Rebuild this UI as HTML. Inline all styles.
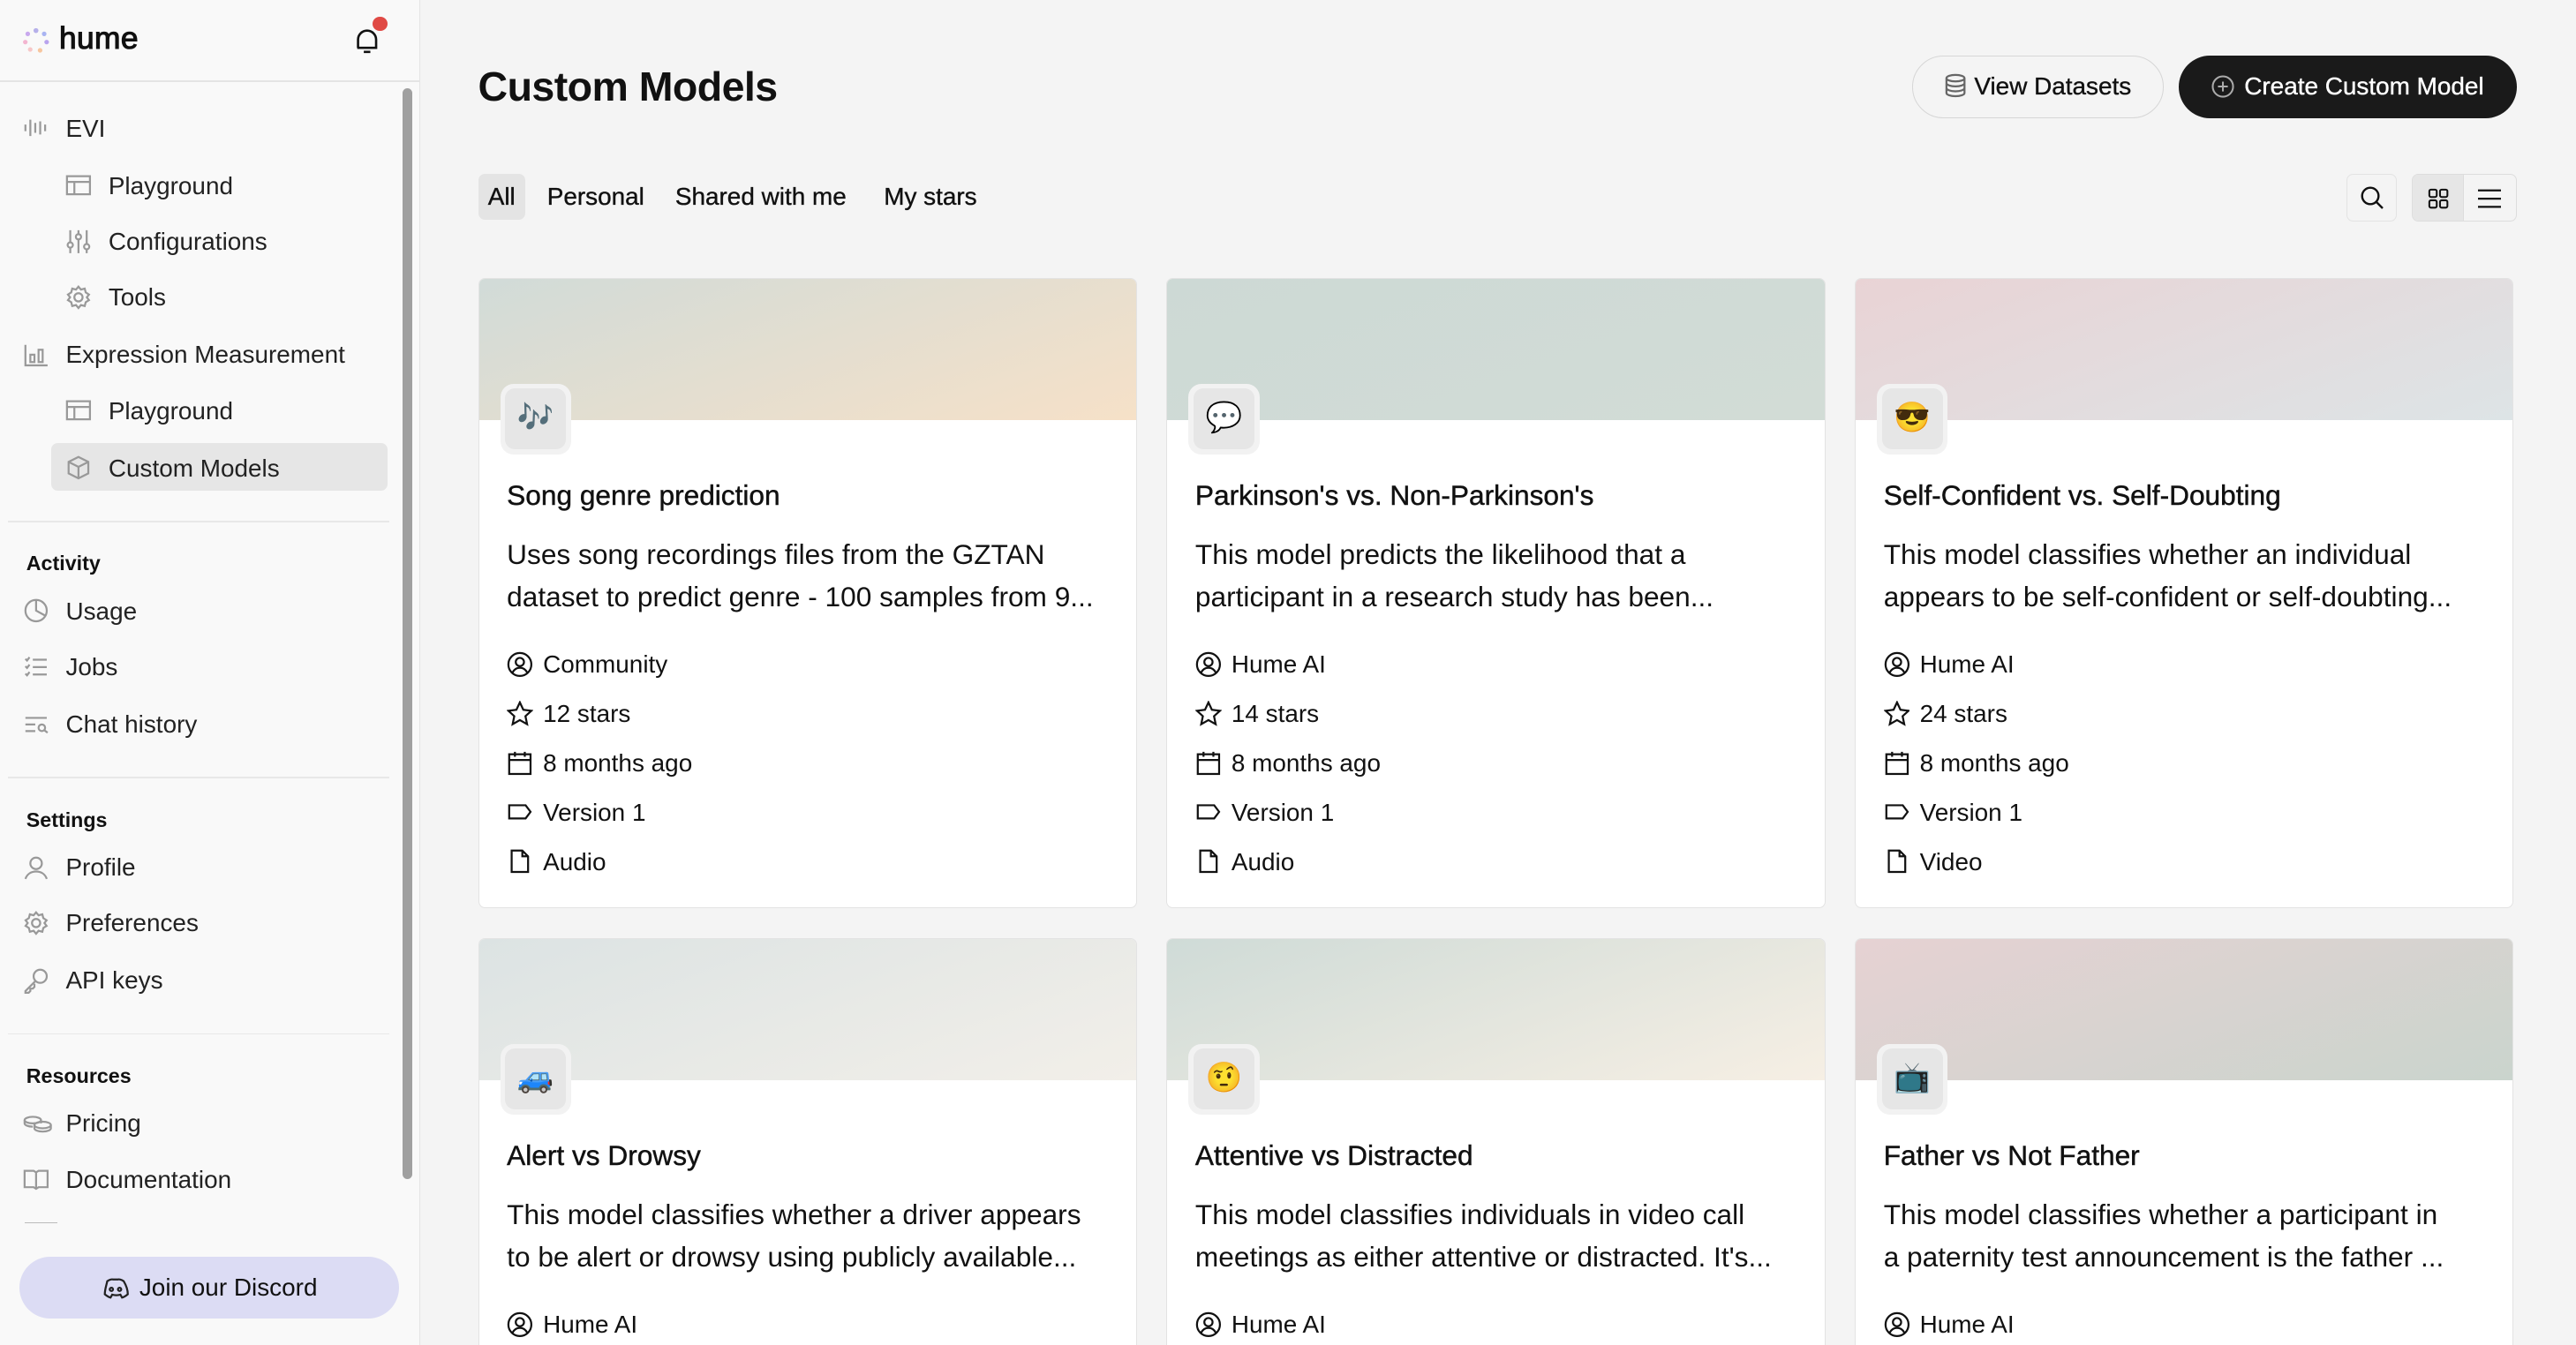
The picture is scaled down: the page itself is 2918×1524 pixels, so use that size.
<!DOCTYPE html>
<html><head><meta charset="utf-8"><style>
*{box-sizing:border-box;margin:0;padding:0}
html,body{width:2918px;height:1524px;overflow:hidden;background:#f4f4f4}
#w{zoom:1.861;width:1568px;height:819px;position:relative;font-family:"Liberation Sans","Noto Sans CJK JP",sans-serif;color:#111;overflow:hidden}
.a{position:absolute}
#sb{left:0;top:0;width:256px;height:819px;background:#f9f9f9;border-right:1px solid #e4e4e4}
.ni{position:absolute;font-size:15px;color:#222;white-space:nowrap;line-height:20px}
.ni svg{position:absolute;left:-26px;top:2px}
.sec{position:absolute;left:16px;font-size:12.5px;font-weight:bold;color:#111}
.hr{position:absolute;left:5px;width:232px;height:1px;background:#e8e8e8}
.card{position:absolute;width:401px;height:384px;background:#fff;border:1px solid #e3e3e3;border-radius:4px;overflow:hidden}
.ban{height:86px}
.ib{position:absolute;left:13px;top:64px;width:43px;height:43px;background:#f2f2f2;border-radius:8px;padding:3px}
.ib div{width:37px;height:37px;background:#e6e6e6;border-radius:6px;text-align:center;line-height:37px;font-size:18px}
.t{position:absolute;left:17px;top:122px;font-size:17px;font-weight:500;white-space:nowrap;-webkit-text-stroke:0.25px #111}
.d{position:absolute;left:17px;top:155px;width:360px;font-size:17px;line-height:26px;color:#111}
.m{position:absolute;left:17px;font-size:15px;white-space:nowrap;line-height:20px;padding-left:22px}
.m svg{position:absolute;left:0;top:2px}
.tab{position:absolute;top:106px;height:28px;line-height:28px;font-size:15px;padding:0 6px;border-radius:4px;-webkit-text-stroke:0.2px #111}
</style></head><body><div id="w">
<div id="sb" class="a">
 <svg class="a" style="left:13px;top:16px" width="18" height="18" viewBox="0 0 18 18"><circle cx="9" cy="2.5" r="1.5" fill="#b6b0ea"/><circle cx="4" cy="4.5" r="1.4" fill="#c9a9ee"/><circle cx="14" cy="4.5" r="1.4" fill="#a9b4f2"/><circle cx="2.5" cy="9.5" r="1.4" fill="#f3b5d0"/><circle cx="15.5" cy="9.5" r="1.4" fill="#b9a4ee"/><circle cx="5.5" cy="14" r="1.4" fill="#f7c7c7"/><circle cx="11.5" cy="14.5" r="1.4" fill="#f7c69f"/></svg>
 <div class="a" style="left:36px;top:13px;font-size:19px;font-weight:normal;-webkit-text-stroke:0.6px #111;letter-spacing:0.2px">hume</div>
 <svg class="a" style="left:215px;top:16px" width="17" height="17" viewBox="0 0 17 17" fill="none" stroke="#111" stroke-width="1.4"><path d="M3 13V8a5.5 5.5 0 0 1 11 0v5H2.5 14.5M6.5 15.5h4"/></svg>
 <div class="a" style="left:227px;top:10px;width:9px;height:9px;border-radius:50%;background:#e04a45"></div>
 <div class="a" style="left:0;top:49px;width:255px;height:1px;background:#e4e4e4"></div>
 <div class="a" style="left:245px;top:54px;width:6px;height:664px;border-radius:3px;background:#a0a0a0"></div>

 <div class="ni" style="left:40px;top:68px"><svg width="16" height="16" viewBox="0 0 16 16" stroke="#999" stroke-width="1.2"><path d="M1.5 6v4M4.5 3v10M7.5 5v6M10.5 4v8M13.5 6v4"/></svg>EVI</div>
 <div class="ni" style="left:66px;top:103px"><svg width="16" height="16" viewBox="0 0 16 16" fill="none" stroke="#999" stroke-width="1.2"><rect x="1" y="2.5" width="14" height="11"/><path d="M1 6h14M5.5 6v7.5"/></svg>Playground</div>
 <div class="ni" style="left:66px;top:137px"><svg width="16" height="16" viewBox="0 0 16 16" fill="none" stroke="#999" stroke-width="1.2"><path d="M3 1v14M8 1v14M13 1v14"/><circle cx="3" cy="10" r="1.6" fill="#f9f9f9"/><circle cx="8" cy="5" r="1.6" fill="#f9f9f9"/><circle cx="13" cy="11" r="1.6" fill="#f9f9f9"/></svg>Configurations</div>
 <div class="ni" style="left:66px;top:171px"><svg width="16" height="16" viewBox="0 0 16 16" fill="none" stroke="#999" stroke-width="1.2"><circle cx="8" cy="8" r="2.5"/><path d="M8 1.5l1.5 1.8 2.3-.6.6 2.3 2 1.3-1.3 1.7 1.3 1.7-2 1.3-.6 2.3-2.3-.6L8 14.5l-1.5-1.8-2.3.6-.6-2.3-2-1.3L2.9 8 1.6 6.3l2-1.3.6-2.3 2.3.6z"/></svg>Tools</div>
 <div class="ni" style="left:40px;top:206px"><svg width="16" height="16" viewBox="0 0 16 16" fill="none" stroke="#999" stroke-width="1.2"><path d="M1.5 2v12.5H15"/><rect x="4.5" y="8" width="2.5" height="4.5"/><rect x="9.5" y="5" width="2.5" height="7.5"/></svg>Expression Measurement</div>
 <div class="ni" style="left:66px;top:240px"><svg width="16" height="16" viewBox="0 0 16 16" fill="none" stroke="#999" stroke-width="1.2"><rect x="1" y="2.5" width="14" height="11"/><path d="M1 6h14M5.5 6v7.5"/></svg>Playground</div>
 <div class="a" style="left:31px;top:270px;width:205px;height:29px;background:#e6e6e6;border-radius:4px"></div>
 <div class="ni" style="left:66px;top:275px"><svg width="16" height="16" viewBox="0 0 16 16" fill="none" stroke="#999" stroke-width="1.2"><path d="M8 1.5l6 3v7l-6 3-6-3v-7zM2 4.5l6 3 6-3M8 7.5v7"/></svg>Custom Models</div>
 <div class="hr" style="top:317px"></div>
 <div class="sec" style="top:336px">Activity</div>
 <div class="ni" style="left:40px;top:362px"><svg width="16" height="16" viewBox="0 0 16 16" fill="none" stroke="#999" stroke-width="1.2"><circle cx="8" cy="8" r="6.5"/><path d="M8 1.5V8l5.5 3"/></svg>Usage</div>
 <div class="ni" style="left:40px;top:396px"><svg width="16" height="16" viewBox="0 0 16 16" fill="none" stroke="#999" stroke-width="1.2"><path d="M1.5 3l1 1 1.5-2M1.5 7.5l1 1 1.5-2M1.5 12l1 1 1.5-2M6 3.5h8.5M6 8h8.5M6 12.5h8.5"/></svg>Jobs</div>
 <div class="ni" style="left:40px;top:431px"><svg width="16" height="16" viewBox="0 0 16 16" fill="none" stroke="#999" stroke-width="1.2"><path d="M1.5 4h13M1.5 8h6M1.5 12h6"/><circle cx="11.5" cy="10" r="2"/><path d="M13 11.5l2 1.5"/></svg>Chat history</div>
 <div class="hr" style="top:473px"></div>
 <div class="sec" style="top:492px">Settings</div>
 <div class="ni" style="left:40px;top:518px"><svg width="16" height="16" viewBox="0 0 16 16" fill="none" stroke="#999" stroke-width="1.2"><circle cx="8" cy="5.5" r="3.5"/><path d="M1.5 15c1-3 3.5-4.5 6.5-4.5s5.5 1.5 6.5 4.5"/></svg>Profile</div>
 <div class="ni" style="left:40px;top:552px"><svg width="16" height="16" viewBox="0 0 16 16" fill="none" stroke="#999" stroke-width="1.2"><circle cx="8" cy="8" r="2.5"/><path d="M8 1.5l1.5 1.8 2.3-.6.6 2.3 2 1.3-1.3 1.7 1.3 1.7-2 1.3-.6 2.3-2.3-.6L8 14.5l-1.5-1.8-2.3.6-.6-2.3-2-1.3L2.9 8 1.6 6.3l2-1.3.6-2.3 2.3.6z"/></svg>Preferences</div>
 <div class="ni" style="left:40px;top:587px"><svg width="16" height="16" viewBox="0 0 16 16" fill="none" stroke="#999" stroke-width="1.2"><circle cx="10.5" cy="5.5" r="4"/><path d="M7.5 8.5L1.5 14.5v1h2l1-1v-1.5h1.5l1-1V10"/></svg>API keys</div>
 <div class="hr" style="top:629px"></div>
 <div class="sec" style="top:648px">Resources</div>
 <div class="ni" style="left:40px;top:674px"><svg width="18" height="16" viewBox="0 0 18 16" fill="none" stroke="#999" stroke-width="1.2"><ellipse cx="6" cy="6" rx="5" ry="2"/><path d="M1 6v2c0 1 2 2 5 2M11 6v2"/><ellipse cx="12" cy="9" rx="5" ry="2"/><path d="M7 9v2c0 1 2 2 5 2s5-1 5-2V9"/></svg>Pricing</div>
 <div class="ni" style="left:40px;top:708px"><svg width="16" height="16" viewBox="0 0 16 16" fill="none" stroke="#999" stroke-width="1.2"><path d="M1 3h5.5l1.5 1 1.5-1H15v10H9.5L8 14l-1.5-1H1zM8 4v10"/></svg>Documentation</div>
 <div class="a" style="left:15px;top:744px;width:20px;height:1px;background:#bbb"></div>
 <div class="a" style="left:12px;top:765px;width:231px;height:38px;border-radius:19px;background:#dcdcf4;font-size:15px;line-height:38px;text-align:center;color:#111">
  <svg style="vertical-align:-3px;margin-right:6px" width="17" height="14" viewBox="0 0 17 14" fill="none" stroke="#222" stroke-width="1.2"><path d="M3.5 2.5C5 1.5 6.5 1.2 7 1.5h3c.5-.3 2 0 3.5 1 1.5 2.5 2.5 5 2.5 8-1.2 1-2.5 1.8-3.5 2l-1-1.8c-1.7.5-3.3.5-5 0L5.5 12.5c-1-.2-2.3-1-3.5-2 0-3 1-5.5 1.5-8z"/><circle cx="6" cy="7.5" r="1"/><circle cx="11" cy="7.5" r="1"/></svg>Join our Discord</div>
</div>

<div class="a" style="left:291px;top:38px;font-size:25px;font-weight:bold;letter-spacing:-0.3px">Custom Models</div>
<div class="a" style="left:1164px;top:34px;width:153px;height:38px;border:1px solid #d6d6d6;border-radius:19px;font-size:15px;line-height:36px;text-align:center;-webkit-text-stroke:0.2px #111">
 <svg style="vertical-align:-2px;margin-right:5px" width="13" height="15" viewBox="0 0 13 15" fill="none" stroke="#666" stroke-width="1.2"><ellipse cx="6.5" cy="3" rx="5.5" ry="2"/><path d="M1 3v9c0 1.1 2.5 2 5.5 2s5.5-.9 5.5-2V3M1 6c0 1.1 2.5 2 5.5 2S12 7.1 12 6M1 9c0 1.1 2.5 2 5.5 2S12 10.1 12 9"/></svg>View Datasets</div>
<div class="a" style="left:1326px;top:34px;width:206px;height:38px;background:#1a1a1a;border-radius:19px;font-size:15px;line-height:38px;text-align:center;color:#fff;-webkit-text-stroke:0.2px #fff">
 <svg style="vertical-align:-2px;margin-right:6px" width="14" height="14" viewBox="0 0 14 14" fill="none" stroke="#aaa" stroke-width="1.1"><circle cx="7" cy="7" r="6.2"/><path d="M7 4v6M4 7h6"/></svg>Create Custom Model</div>

<div class="tab" style="left:291px;background:#e4e4e4">All</div>
<div class="tab" style="left:327px">Personal</div>
<div class="tab" style="left:405px">Shared with me</div>
<div class="tab" style="left:532px">My stars</div>
<div class="a" style="left:1428px;top:106px;width:31px;height:29px;border:1px solid #e3e3e3;border-radius:4px"><svg style="position:absolute;left:7px;top:6px" width="16" height="16" viewBox="0 0 16 16" fill="none" stroke="#111" stroke-width="1.3"><circle cx="7" cy="7" r="5"/><path d="M10.5 10.5l4 4"/></svg></div>
<div class="a" style="left:1468px;top:106px;width:64px;height:29px;border:1px solid #ddd;border-radius:4px;overflow:hidden">
 <div class="a" style="left:0;top:0;width:31px;height:29px;background:#e6e6e6;border-right:1px solid #ddd"></div>
 <svg style="position:absolute;left:9px;top:8px" width="13" height="13" viewBox="0 0 13 13" fill="none" stroke="#111" stroke-width="1.1"><rect x="1" y="1" width="4.5" height="4.5" rx="1"/><rect x="7.5" y="1" width="4.5" height="4.5" rx="1"/><rect x="1" y="7.5" width="4.5" height="4.5" rx="1"/><rect x="7.5" y="7.5" width="4.5" height="4.5" rx="1"/></svg>
 <svg style="position:absolute;left:40px;top:8px" width="14" height="13" viewBox="0 0 14 13" stroke="#111" stroke-width="1.2"><path d="M0 1.5h14M0 6.5h14M0 11.5h14"/></svg>
</div>

<!-- Row 1 -->
<div class="card" style="left:291px;top:169px">
 <div class="ban" style="background:linear-gradient(160deg,#d1dbd8,#f6e1c8)"></div>
 <div class="ib"><div>🎶</div></div>
 <div class="t">Song genre prediction</div>
 <div class="d">Uses song recordings files from the GZTAN dataset to predict genre - 100 samples from 9...</div>
 <div class="m" style="top:225px"><svg width="16" height="16" viewBox="0 0 16 16" fill="none" stroke="#111" stroke-width="1.2"><circle cx="8" cy="8" r="7"/><circle cx="8" cy="6.5" r="2.5"/><path d="M3.5 13c1-2 2.5-3 4.5-3s3.5 1 4.5 3"/></svg>Community</div>
 <div class="m" style="top:255px"><svg width="16" height="16" viewBox="0 0 16 16" fill="none" stroke="#111" stroke-width="1.2"><path d="M8 1l2.1 4.5 4.9.6-3.6 3.3 1 4.9L8 11.8 3.6 14.3l1-4.9L1 6.1l4.9-.6z"/></svg>12 stars</div>
 <div class="m" style="top:285px"><svg width="16" height="16" viewBox="0 0 16 16" fill="none" stroke="#111" stroke-width="1.2"><rect x="1.5" y="2.5" width="13" height="12"/><path d="M1.5 6h13M5 1v3M11 1v3"/></svg>8 months ago</div>
 <div class="m" style="top:315px"><svg width="16" height="16" viewBox="0 0 16 16" fill="none" stroke="#111" stroke-width="1.2"><path d="M1.5 4h10l3 4-3 4h-10z"/></svg>Version 1</div>
 <div class="m" style="top:345px"><svg width="16" height="16" viewBox="0 0 16 16" fill="none" stroke="#111" stroke-width="1.2"><path d="M3 1.5h6.5L13 5v9.5H3zM9.5 1.5V5H13"/></svg>Audio</div>
</div>
<div class="card" style="left:710px;top:169px">
 <div class="ban" style="background:linear-gradient(160deg,#cdd9d5,#d2dcd6)"></div>
 <div class="ib"><div>💬</div></div>
 <div class="t">Parkinson's vs. Non-Parkinson's</div>
 <div class="d">This model predicts the likelihood that a participant in a research study has been...</div>
 <div class="m" style="top:225px"><svg width="16" height="16" viewBox="0 0 16 16" fill="none" stroke="#111" stroke-width="1.2"><circle cx="8" cy="8" r="7"/><circle cx="8" cy="6.5" r="2.5"/><path d="M3.5 13c1-2 2.5-3 4.5-3s3.5 1 4.5 3"/></svg>Hume AI</div>
 <div class="m" style="top:255px"><svg width="16" height="16" viewBox="0 0 16 16" fill="none" stroke="#111" stroke-width="1.2"><path d="M8 1l2.1 4.5 4.9.6-3.6 3.3 1 4.9L8 11.8 3.6 14.3l1-4.9L1 6.1l4.9-.6z"/></svg>14 stars</div>
 <div class="m" style="top:285px"><svg width="16" height="16" viewBox="0 0 16 16" fill="none" stroke="#111" stroke-width="1.2"><rect x="1.5" y="2.5" width="13" height="12"/><path d="M1.5 6h13M5 1v3M11 1v3"/></svg>8 months ago</div>
 <div class="m" style="top:315px"><svg width="16" height="16" viewBox="0 0 16 16" fill="none" stroke="#111" stroke-width="1.2"><path d="M1.5 4h10l3 4-3 4h-10z"/></svg>Version 1</div>
 <div class="m" style="top:345px"><svg width="16" height="16" viewBox="0 0 16 16" fill="none" stroke="#111" stroke-width="1.2"><path d="M3 1.5h6.5L13 5v9.5H3zM9.5 1.5V5H13"/></svg>Audio</div>
</div>
<div class="card" style="left:1129px;top:169px">
 <div class="ban" style="background:linear-gradient(160deg,#e9d3d5,#dde4e6)"></div>
 <div class="ib"><div>😎</div></div>
 <div class="t">Self-Confident vs. Self-Doubting</div>
 <div class="d">This model classifies whether an individual appears to be self-confident or self-doubting...</div>
 <div class="m" style="top:225px"><svg width="16" height="16" viewBox="0 0 16 16" fill="none" stroke="#111" stroke-width="1.2"><circle cx="8" cy="8" r="7"/><circle cx="8" cy="6.5" r="2.5"/><path d="M3.5 13c1-2 2.5-3 4.5-3s3.5 1 4.5 3"/></svg>Hume AI</div>
 <div class="m" style="top:255px"><svg width="16" height="16" viewBox="0 0 16 16" fill="none" stroke="#111" stroke-width="1.2"><path d="M8 1l2.1 4.5 4.9.6-3.6 3.3 1 4.9L8 11.8 3.6 14.3l1-4.9L1 6.1l4.9-.6z"/></svg>24 stars</div>
 <div class="m" style="top:285px"><svg width="16" height="16" viewBox="0 0 16 16" fill="none" stroke="#111" stroke-width="1.2"><rect x="1.5" y="2.5" width="13" height="12"/><path d="M1.5 6h13M5 1v3M11 1v3"/></svg>8 months ago</div>
 <div class="m" style="top:315px"><svg width="16" height="16" viewBox="0 0 16 16" fill="none" stroke="#111" stroke-width="1.2"><path d="M1.5 4h10l3 4-3 4h-10z"/></svg>Version 1</div>
 <div class="m" style="top:345px"><svg width="16" height="16" viewBox="0 0 16 16" fill="none" stroke="#111" stroke-width="1.2"><path d="M3 1.5h6.5L13 5v9.5H3zM9.5 1.5V5H13"/></svg>Video</div>
</div>

<!-- Row 2 -->
<div class="card" style="left:291px;top:571px">
 <div class="ban" style="background:linear-gradient(160deg,#dce3e3,#f2efe9)"></div>
 <div class="ib"><div>🚙</div></div>
 <div class="t">Alert vs Drowsy</div>
 <div class="d">This model classifies whether a driver appears to be alert or drowsy using publicly available...</div>
 <div class="m" style="top:225px"><svg width="16" height="16" viewBox="0 0 16 16" fill="none" stroke="#111" stroke-width="1.2"><circle cx="8" cy="8" r="7"/><circle cx="8" cy="6.5" r="2.5"/><path d="M3.5 13c1-2 2.5-3 4.5-3s3.5 1 4.5 3"/></svg>Hume AI</div>
</div>
<div class="card" style="left:710px;top:571px">
 <div class="ban" style="background:linear-gradient(160deg,#cfdbd7,#f6efe4)"></div>
 <div class="ib"><div>🤨</div></div>
 <div class="t">Attentive vs Distracted</div>
 <div class="d">This model classifies individuals in video call meetings as either attentive or distracted. It's...</div>
 <div class="m" style="top:225px"><svg width="16" height="16" viewBox="0 0 16 16" fill="none" stroke="#111" stroke-width="1.2"><circle cx="8" cy="8" r="7"/><circle cx="8" cy="6.5" r="2.5"/><path d="M3.5 13c1-2 2.5-3 4.5-3s3.5 1 4.5 3"/></svg>Hume AI</div>
</div>
<div class="card" style="left:1129px;top:571px">
 <div class="ban" style="background:linear-gradient(160deg,#e6d2d3,#cad4cd)"></div>
 <div class="ib"><div>📺</div></div>
 <div class="t">Father vs Not Father</div>
 <div class="d" style="width:345px">This model classifies whether a participant in a paternity test announcement is the father ...</div>
 <div class="m" style="top:225px"><svg width="16" height="16" viewBox="0 0 16 16" fill="none" stroke="#111" stroke-width="1.2"><circle cx="8" cy="8" r="7"/><circle cx="8" cy="6.5" r="2.5"/><path d="M3.5 13c1-2 2.5-3 4.5-3s3.5 1 4.5 3"/></svg>Hume AI</div>
</div>
</div></body></html>
